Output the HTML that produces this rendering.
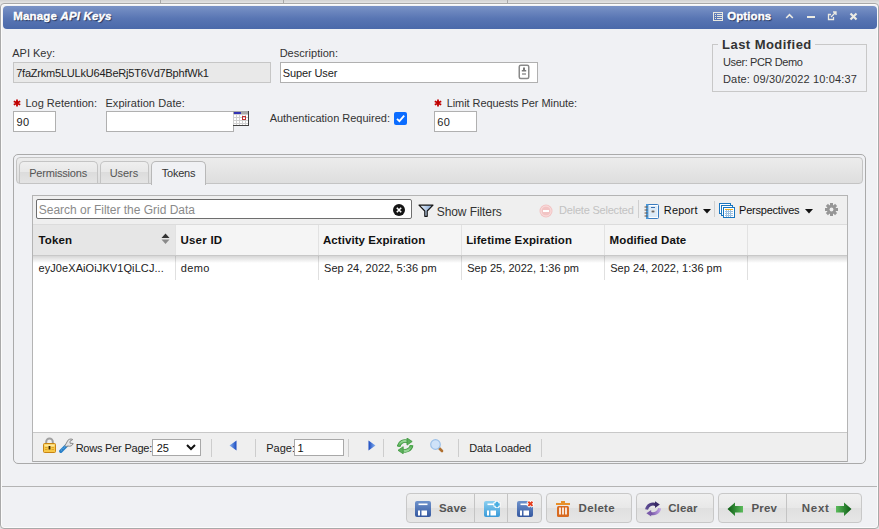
<!DOCTYPE html>
<html><head><meta charset="utf-8"><style>
html,body{margin:0;padding:0;}
body{width:879px;height:529px;position:relative;overflow:hidden;background:linear-gradient(#d2d2d2,#e4e4e4 3px,#e4e4e4);font-family:"Liberation Sans", sans-serif;}
body>div,body>svg{position:absolute;box-sizing:border-box;}
.t{white-space:nowrap;line-height:1;}
i{font-style:italic;}
</style></head><body>
<div style="left:160px;top:0px;width:1px;height:3px;background:#a8a8a8;"></div>
<div style="left:283px;top:0px;width:1px;height:3px;background:#a8a8a8;"></div>
<div style="left:507px;top:0px;width:1px;height:3px;background:#a8a8a8;"></div>
<div style="left:0px;top:3px;width:879px;height:526px;border:1px solid #a9a9a9;border-radius:4px;background:#f0f1f4;box-shadow:inset 0 0 0 1px #fbfbfb;"></div>
<div style="left:3px;top:6px;width:874px;height:23px;border-radius:4px;background:linear-gradient(#7a93c6,#5875b3 55%,#4a69aa);"></div>
<div class="t" id="t1" style="left:13.20px;top:10.75px;font-size:11.5px;font-weight:bold;color:#fff;letter-spacing:0.171px;text-shadow:1px 1px 1px #1a2a50;-webkit-text-stroke:0.35px #fff;">Manage <i>API Keys</i></div>
<svg style="left:713px;top:12px;" width="11" height="10" viewBox="0 0 11 10"><rect x="0.5" y="0.5" width="9" height="8" fill="none" stroke="#e8e8df" stroke-width="1"/><path d="M2 2.5h1M2 4.5h1M2 6.5h1M4 2.5h5M4 4.5h5M4 6.5h5" stroke="#e8e8df" stroke-width="1"/></svg>
<div class="t" id="t2" style="left:727.20px;top:10.50px;font-size:11.5px;font-weight:bold;color:#fff;letter-spacing:0.100px;text-shadow:1px 1px 1px #1a2a50;-webkit-text-stroke:0.35px #fff;">Options</div>
<svg style="left:785px;top:13px;" width="9" height="6" viewBox="0 0 9 6"><path d="M1.2 5L4.5 1.7L7.8 5" fill="none" stroke="#ecebe3" stroke-width="1.6"/></svg>
<svg style="left:807px;top:15px;" width="9" height="4" viewBox="0 0 9 4"><rect x="0" y="1" width="8" height="2" fill="#ecebe3"/></svg>
<svg style="left:827px;top:11px;" width="11" height="10" viewBox="0 0 11 10"><path d="M4 3.5H1.5V8.5H6.5V6" fill="none" stroke="#ecebe3" stroke-width="1.3"/><path d="M4 6L9 1M6 1H9V4" fill="none" stroke="#ecebe3" stroke-width="1.3"/></svg>
<svg style="left:849px;top:12px;" width="9" height="9" viewBox="0 0 9 9"><path d="M1.5 1.5L7.5 7.5M7.5 1.5L1.5 7.5" stroke="#ecebe3" stroke-width="2.2"/></svg>
<div class="t" id="t3" style="left:12.23px;top:47.76px;font-size:11px;font-weight:normal;color:#333;letter-spacing:-0.007px;">API Key:</div>
<div style="left:13px;top:62px;width:258px;height:21px;border:1px solid #c6c6c6;background:#e9e9e9;"></div>
<div class="t" id="t4" style="left:16.23px;top:68.31px;font-size:11px;font-weight:normal;color:#222;letter-spacing:-0.216px;">7faZrkm5LULkU64BeRj5T6Vd7BphfWk1</div>
<div class="t" id="t5" style="left:279.63px;top:47.76px;font-size:11px;font-weight:normal;color:#333;letter-spacing:0.032px;">Description:</div>
<div style="left:280px;top:62px;width:258px;height:21px;border:1px solid #b0b0b0;background:#fff;"></div>
<div class="t" id="t6" style="left:282.83px;top:67.86px;font-size:11px;font-weight:normal;color:#222;letter-spacing:-0.123px;">Super User</div>
<svg style="left:518px;top:64px;" width="12" height="16" viewBox="0 0 12 16"><rect x="1.25" y="1.25" width="9.5" height="13.3" rx="1.5" fill="#fff" stroke="#8a8a8a" stroke-width="1.5"/><path d="M5 3.5h2v2.5h1.2v1.5h-4.4v-1.5h1.2z" fill="#7a7a7a"/><rect x="4" y="9" width="4" height="2" fill="#b0b0b0"/></svg>
<div style="left:712px;top:44px;width:155px;height:48px;border:1px solid #c8c8c8;"></div>
<div style="left:718px;top:38px;width:97px;height:12px;background:#f0f1f4;"></div>
<div class="t" id="t7" style="left:722.09px;top:38.10px;font-size:13px;font-weight:bold;color:#333;letter-spacing:0.451px;">Last Modified</div>
<div class="t" id="t8" style="left:723.03px;top:57.06px;font-size:11px;font-weight:normal;color:#333;letter-spacing:-0.395px;">User: PCR Demo</div>
<div class="t" id="t9" style="left:723.03px;top:73.76px;font-size:11px;font-weight:normal;color:#333;letter-spacing:0.150px;">Date: 09/30/2022 10:04:37</div>
<svg style="left:13px;top:99px;" width="8" height="8" viewBox="0 0 8 8"><path d="M4 0.5V7.5M0.8 2.2L7.2 5.8M7.2 2.2L0.8 5.8" stroke="#c00000" stroke-width="1.8"/></svg>
<div class="t" id="t10" style="left:25.43px;top:98.36px;font-size:11px;font-weight:normal;color:#333;letter-spacing:0.006px;">Log Retention:</div>
<div class="t" id="t11" style="left:105.43px;top:98.36px;font-size:11px;font-weight:normal;color:#333;letter-spacing:0.071px;">Expiration Date:</div>
<div style="left:13px;top:111px;width:43px;height:21px;border:1px solid #b0b0b0;background:#fff;"></div>
<div class="t" id="t12" style="left:16.43px;top:117.36px;font-size:11px;font-weight:normal;color:#222;letter-spacing:0.400px;">90</div>
<div style="left:106px;top:111px;width:128px;height:21px;border:1px solid #b0b0b0;background:#fff;"></div>
<svg style="left:233px;top:111px;" width="16" height="15" viewBox="0 0 16 15"><rect x="0" y="0" width="16" height="15" fill="#fff"/><rect x="0" y="0" width="16" height="3" fill="#a8a8a8"/><rect x="1" y="1" width="7" height="2" fill="#3434b4"/><rect x="0" y="3" width="1" height="12" fill="#d0d0d0"/><rect x="3" y="3" width="1" height="12" fill="#d0d0d0"/><rect x="6" y="3" width="1" height="12" fill="#d0d0d0"/><rect x="9" y="3" width="1" height="12" fill="#d0d0d0"/><rect x="12" y="3" width="1" height="12" fill="#d0d0d0"/><rect x="15" y="3" width="1" height="12" fill="#d0d0d0"/><rect x="0" y="3" width="15" height="1" fill="#d0d0d0"/><rect x="0" y="6" width="15" height="1" fill="#d0d0d0"/><rect x="0" y="9" width="15" height="1" fill="#d0d0d0"/><rect x="0" y="12" width="15" height="1" fill="#d0d0d0"/><rect x="9.5" y="5.5" width="3" height="3" fill="none" stroke="#c03030" stroke-width="1"/><rect x="15" y="0" width="1" height="15" fill="#404040"/><rect x="0" y="14" width="16" height="1" fill="#404040"/></svg>
<div class="t" id="t13" style="left:269.63px;top:113.46px;font-size:11px;font-weight:normal;color:#333;letter-spacing:-0.007px;">Authentication Required:</div>
<div style="left:394px;top:112px;width:13px;height:13px;border-radius:2px;background:#0b6cff;"><svg width="13" height="13" style="position:absolute;left:0;top:0"><path d="M3 6.8L5.4 9.2L10.2 3.6" fill="none" stroke="#fff" stroke-width="1.8"/></svg></div>
<svg style="left:434px;top:99px;" width="8" height="8" viewBox="0 0 8 8"><path d="M4 0.5V7.5M0.8 2.2L7.2 5.8M7.2 2.2L0.8 5.8" stroke="#c00000" stroke-width="1.8"/></svg>
<div class="t" id="t14" style="left:446.63px;top:98.36px;font-size:11px;font-weight:normal;color:#333;letter-spacing:-0.060px;">Limit Requests Per Minute:</div>
<div style="left:434px;top:111px;width:43px;height:21px;border:1px solid #b0b0b0;background:#fff;"></div>
<div class="t" id="t15" style="left:437.23px;top:117.36px;font-size:11px;font-weight:normal;color:#222;letter-spacing:0.400px;">60</div>
<div style="left:13px;top:154px;width:853px;height:310px;border:1px solid #aaaaaa;border-radius:5px;background:#f0f1f4;"></div>
<div style="left:16px;top:157px;width:847px;height:27px;border:1px solid #c4c4c4;border-radius:4px;background:linear-gradient(#ececec,#dedede);"></div>
<div style="left:19px;top:161px;width:79px;height:22px;border:1px solid #c4c4c4;border-bottom:none;border-radius:5px 5px 0 0;background:linear-gradient(#efefef,#e7e7e7 50%,#dcdcdc 50%,#e4e4e4);"></div>
<div style="left:100px;top:161px;width:49px;height:22px;border:1px solid #c4c4c4;border-bottom:none;border-radius:5px 5px 0 0;background:linear-gradient(#efefef,#e7e7e7 50%,#dcdcdc 50%,#e4e4e4);"></div>
<div style="left:151px;top:161px;width:55px;height:24px;border:1px solid #b8b8b8;border-bottom:none;border-radius:5px 5px 0 0;background:#f0f1f4;"></div>
<div class="t" id="t16" style="left:29.23px;top:168.36px;font-size:11px;font-weight:normal;color:#555;letter-spacing:-0.190px;">Permissions</div>
<div class="t" id="t17" style="left:109.63px;top:168.36px;font-size:11px;font-weight:normal;color:#555;letter-spacing:-0.025px;">Users</div>
<div class="t" id="t18" style="left:161.83px;top:168.36px;font-size:11px;font-weight:normal;color:#333;letter-spacing:-0.250px;">Tokens</div>
<div style="left:32px;top:195px;width:816px;height:267px;border:1px solid #b4b4b4;background:#fff;"></div>
<div style="left:33px;top:196px;width:814px;height:29px;background:#efefef;border-bottom:1px solid #d8d8d8;"></div>
<div style="left:36px;top:199px;width:376px;height:20px;border:1px solid #6e6e6e;border-radius:2px;background:#fff;"></div>
<div class="t" id="t19" style="left:38.76px;top:204.13px;font-size:12px;font-weight:normal;color:#8a8a8a;letter-spacing:-0.019px;">Search or Filter the Grid Data</div>
<svg style="left:393px;top:204px;" width="12" height="12" viewBox="0 0 12 12"><circle cx="6" cy="6" r="6" fill="#151515"/><path d="M3.8 3.8L8.2 8.2M8.2 3.8L3.8 8.2" stroke="#fff" stroke-width="1.6"/></svg>
<svg style="left:418px;top:204px;" width="16" height="13" viewBox="0 0 16 13"><defs><linearGradient id="fg" x1="0" x2="1"><stop offset="0" stop-color="#f4f8ff"/><stop offset="1" stop-color="#7aa0d0"/></linearGradient></defs><path d="M1 1.2H15L9.2 7V12.3H6.8V7Z" fill="url(#fg)" stroke="#151515" stroke-width="1.2" stroke-linejoin="round"/></svg>
<div class="t" id="t20" style="left:436.76px;top:206.03px;font-size:12px;font-weight:normal;color:#333;letter-spacing:-0.087px;">Show Filters</div>
<svg style="left:539px;top:204px;" width="14" height="14" viewBox="0 0 14 14"><circle cx="7" cy="7" r="6.5" fill="#f2c4c4"/><circle cx="7" cy="7" r="5" fill="none" stroke="#fbe4e4" stroke-width="0.8"/><rect x="4" y="6" width="6" height="2" fill="#fff"/></svg>
<div class="t" id="t21" style="left:559.03px;top:205.16px;font-size:11px;font-weight:normal;color:#c2c2c2;letter-spacing:-0.206px;">Delete Selected</div>
<div style="left:638px;top:200px;width:1px;height:18px;background:#cfcfcf;"></div>
<svg style="left:644px;top:204px;" width="15" height="15" viewBox="0 0 15 15"><rect x="2.5" y="0.5" width="12" height="14" rx="1" fill="#fff" stroke="#3a7cc0" stroke-width="1"/><rect x="2" y="0" width="2.5" height="15" fill="#4a98d8"/><rect x="5" y="2" width="8.5" height="11" fill="#dbeaf8"/><rect x="7" y="3" width="4" height="1" fill="#3a70b0"/><rect x="7" y="6" width="4" height="3" fill="#fff"/><rect x="7.5" y="6.5" width="3" height="2" fill="#666"/><path d="M0.5 3h3M0.5 6h3M0.5 9h3M0.5 12h3" stroke="#6a5040" stroke-width="1"/></svg>
<div class="t" id="t22" style="left:663.83px;top:204.76px;font-size:11px;font-weight:normal;color:#111;letter-spacing:0.120px;">Report</div>
<svg style="left:703px;top:209px;" width="9" height="5" viewBox="0 0 9 5"><path d="M0 0H8L4 4.5Z" fill="#111"/></svg>
<div style="left:714px;top:201px;width:1px;height:16px;background:#cfcfcf;"></div>
<svg style="left:719px;top:203px;" width="16" height="15" viewBox="0 0 16 15"><rect x="0.5" y="0.5" width="11" height="10" fill="#fff" stroke="#1a76c0" stroke-width="1"/><rect x="2.5" y="2.5" width="11" height="10" fill="#fff" stroke="#1a76c0" stroke-width="1"/><rect x="4.5" y="4.5" width="11" height="10" fill="#fff" stroke="#1a76c0" stroke-width="1"/><rect x="6" y="6" width="8" height="1" fill="#f0b020"/><path d="M6 8.5h8M6 10.5h8M6 12.5h8M7.5 7v7M9.5 7v7M11.5 7v7" stroke="#9cc0e0" stroke-width="1"/></svg>
<div class="t" id="t23" style="left:739.03px;top:204.86px;font-size:11px;font-weight:normal;color:#111;letter-spacing:-0.221px;">Perspectives</div>
<svg style="left:805px;top:209px;" width="9" height="5" viewBox="0 0 9 5"><path d="M0 0H8L4 4.5Z" fill="#111"/></svg>
<svg style="left:825px;top:203px;" width="13" height="13" viewBox="0 0 13 13"><g transform="translate(6.5 6.5)" fill="#969696"><rect x="-1.5" y="-6.5" width="3" height="3" transform="rotate(0)"/><rect x="-1.5" y="-6.5" width="3" height="3" transform="rotate(45)"/><rect x="-1.5" y="-6.5" width="3" height="3" transform="rotate(90)"/><rect x="-1.5" y="-6.5" width="3" height="3" transform="rotate(135)"/><rect x="-1.5" y="-6.5" width="3" height="3" transform="rotate(180)"/><rect x="-1.5" y="-6.5" width="3" height="3" transform="rotate(225)"/><rect x="-1.5" y="-6.5" width="3" height="3" transform="rotate(270)"/><rect x="-1.5" y="-6.5" width="3" height="3" transform="rotate(315)"/><circle r="4.6"/></g><circle cx="6.5" cy="6.5" r="1.9" fill="#efefef"/></svg>
<div style="left:33px;top:224px;width:814px;height:32px;background:#f5f5f5;border-top:1px solid #dcdcdc;border-bottom:1px solid #c8c8c8;box-sizing:border-box;"></div>
<div style="left:33px;top:225px;width:142px;height:30px;background:#e6e6e6;"></div>
<div style="left:175px;top:225px;width:1px;height:30px;background:#e2e2e2;"></div>
<div style="left:175px;top:256px;width:1px;height:24px;background:#e0e0e0;"></div>
<div style="left:318px;top:225px;width:1px;height:30px;background:#e2e2e2;"></div>
<div style="left:318px;top:256px;width:1px;height:24px;background:#e0e0e0;"></div>
<div style="left:461px;top:225px;width:1px;height:30px;background:#e2e2e2;"></div>
<div style="left:461px;top:256px;width:1px;height:24px;background:#e0e0e0;"></div>
<div style="left:604px;top:225px;width:1px;height:30px;background:#e2e2e2;"></div>
<div style="left:604px;top:256px;width:1px;height:24px;background:#e0e0e0;"></div>
<div style="left:747px;top:225px;width:1px;height:30px;background:#e2e2e2;"></div>
<div style="left:747px;top:256px;width:1px;height:24px;background:#e0e0e0;"></div>
<div style="left:33px;top:256px;width:814px;height:7px;background:linear-gradient(rgba(0,0,0,0.16),rgba(0,0,0,0));"></div>
<div class="t" id="t24" style="left:38.59px;top:234.50px;font-size:11.5px;font-weight:bold;color:#111;letter-spacing:0.125px;">Token</div>
<svg style="left:161px;top:233px;" width="9" height="12" viewBox="0 0 9 12"><path d="M0.5 5H8.5L4.5 0.5Z" fill="#333"/><path d="M0.5 6.5H8.5L4.5 11Z" fill="#8a8a8a"/></svg>
<div class="t" id="t25" style="left:180.40px;top:234.50px;font-size:11.5px;font-weight:bold;color:#111;letter-spacing:0.249px;">User ID</div>
<div class="t" id="t26" style="left:323.00px;top:234.50px;font-size:11.5px;font-weight:bold;color:#111;letter-spacing:0.066px;">Activity Expiration</div>
<div class="t" id="t27" style="left:466.19px;top:234.50px;font-size:11.5px;font-weight:bold;color:#111;letter-spacing:0.126px;">Lifetime Expiration</div>
<div class="t" id="t28" style="left:609.59px;top:234.50px;font-size:11.5px;font-weight:bold;color:#111;letter-spacing:0.108px;">Modified Date</div>
<div class="t" id="t29" style="left:38.43px;top:262.76px;font-size:11px;font-weight:normal;color:#222;letter-spacing:0.091px;">eyJ0eXAiOiJKV1QiLCJ...</div>
<div class="t" id="t30" style="left:180.63px;top:262.76px;font-size:11px;font-weight:normal;color:#222;letter-spacing:0.435px;">demo</div>
<div class="t" id="t31" style="left:324.03px;top:262.76px;font-size:11px;font-weight:normal;color:#222;letter-spacing:0.065px;">Sep 24, 2022, 5:36 pm</div>
<div class="t" id="t32" style="left:467.23px;top:262.76px;font-size:11px;font-weight:normal;color:#222;letter-spacing:0.025px;">Sep 25, 2022, 1:36 pm</div>
<div class="t" id="t33" style="left:610.23px;top:262.76px;font-size:11px;font-weight:normal;color:#222;letter-spacing:0.020px;">Sep 24, 2022, 1:36 pm</div>
<div style="left:33px;top:432px;width:814px;height:30px;background:#efefef;border-top:1px solid #c8c8c8;border-bottom:1px solid #a8a8a8;box-sizing:border-box;"></div>
<svg style="left:43px;top:437px;" width="13" height="16" viewBox="0 0 13 16"><path d="M3.2 6.5V4.8a3.3 3.3 0 0 1 6.6 0V6.5" fill="none" stroke="#a0a0a0" stroke-width="2"/><path d="M2.2 6.5h2M8.8 6.5h2" stroke="#6a8ac0" stroke-width="1"/><rect x="0.5" y="6.5" width="12" height="9" rx="1" fill="#f7c848" stroke="#c88412" stroke-width="1"/><rect x="1.5" y="7.5" width="10" height="2" fill="#ffe89a"/><path d="M2 10.5h2.5M2 12.5h2.5M8.5 10.5h2.5M8.5 12.5h2.5" stroke="#d89a20" stroke-width="0.8"/><rect x="5.6" y="9" width="1.8" height="3.5" fill="#3a2400"/></svg>
<svg style="left:59px;top:438px;" width="15" height="15" viewBox="0 0 15 15"><path d="M1.8 13.2L7.5 7.5" stroke="#2a80c8" stroke-width="3.4" stroke-linecap="round"/><path d="M2.2 12.4L7 7.6" stroke="#8cd0f8" stroke-width="0.8" stroke-dasharray="1 1"/><path d="M7 8.5L6 7.5L8 4A4 4 0 0 1 13.8 1.5L11 3.2V5.2L14.2 5.5A4 4 0 0 1 9 8Z" fill="#e4e4e4" stroke="#8a8a8a" stroke-width="1"/></svg>
<div class="t" id="t34" style="left:75.63px;top:443.16px;font-size:11px;font-weight:normal;color:#222;letter-spacing:-0.217px;">Rows Per Page:</div>
<div style="left:152px;top:439px;width:49px;height:17px;border:1px solid #a8a8a8;background:#fff;"></div>
<div class="t" id="t35" style="left:156.63px;top:442.56px;font-size:11px;font-weight:normal;color:#111;letter-spacing:0.000px;">25</div>
<svg style="left:186px;top:444px;" width="10" height="7" viewBox="0 0 10 7"><path d="M1 1L5 5L9 1" fill="none" stroke="#111" stroke-width="2"/></svg>
<div style="left:211px;top:439px;width:1px;height:18px;background:#cdcdcd;"></div>
<div style="left:255px;top:439px;width:1px;height:18px;background:#cdcdcd;"></div>
<div style="left:348px;top:439px;width:1px;height:18px;background:#cdcdcd;"></div>
<div style="left:383px;top:439px;width:1px;height:18px;background:#cdcdcd;"></div>
<div style="left:458px;top:439px;width:1px;height:18px;background:#cdcdcd;"></div>
<div style="left:541px;top:439px;width:1px;height:18px;background:#cdcdcd;"></div>
<svg style="left:229px;top:440px;" width="8" height="11" viewBox="0 0 8 11"><defs><linearGradient id="bl" x1="0" x2="1"><stop offset="0" stop-color="#8ab4f0"/><stop offset="1" stop-color="#1a4ac0"/></linearGradient></defs><path d="M7.5 0.5V10.5L0.5 5.5Z" fill="url(#bl)"/></svg>
<div class="t" id="t36" style="left:266.23px;top:443.16px;font-size:11px;font-weight:normal;color:#222;letter-spacing:0.025px;">Page:</div>
<div style="left:294px;top:439px;width:50px;height:17px;border:1px solid #a8a8a8;background:#fff;"></div>
<div class="t" id="t37" style="left:297.43px;top:442.56px;font-size:11px;font-weight:normal;color:#111;letter-spacing:0.000px;">1</div>
<svg style="left:368px;top:440px;" width="8" height="11" viewBox="0 0 8 11"><defs><linearGradient id="br" x1="0" x2="1"><stop offset="0" stop-color="#1a4ac0"/><stop offset="1" stop-color="#8ab4f0"/></linearGradient></defs><path d="M0.5 0.5V10.5L7.5 5.5Z" fill="url(#br)"/></svg>
<svg style="left:397px;top:438px;" width="17" height="16" viewBox="0 0 17 16"><defs><linearGradient id="rg" x1="0" y1="0" x2="0" y2="1"><stop offset="0" stop-color="#9ad89a"/><stop offset="1" stop-color="#48a848"/></linearGradient></defs><g><path d="M1.6 8.6A6.6 6.6 0 0 1 10.6 3.5" fill="none" stroke="#3c963c" stroke-width="3.6"/><path d="M1.6 8.6A6.6 6.6 0 0 1 10.6 3.5" fill="none" stroke="url(#rg)" stroke-width="2.2"/><path d="M10 0L15.2 3.5L10 7.1Z" fill="#5cb05c" stroke="#3c963c" stroke-width="0.8"/></g><g transform="rotate(180 8.1 7.9)"><path d="M1.6 8.6A6.6 6.6 0 0 1 10.6 3.5" fill="none" stroke="#3c963c" stroke-width="3.6"/><path d="M1.6 8.6A6.6 6.6 0 0 1 10.6 3.5" fill="none" stroke="url(#rg)" stroke-width="2.2"/><path d="M10 0L15.2 3.5L10 7.1Z" fill="#5cb05c" stroke="#3c963c" stroke-width="0.8"/></g></svg>
<svg style="left:430px;top:439px;" width="14" height="14" viewBox="0 0 14 14"><path d="M9 9L12 12" stroke="#b07030" stroke-width="2.6" stroke-linecap="round"/><circle cx="5.5" cy="5.5" r="4.8" fill="#cfe2f8" stroke="#9cc0e8" stroke-width="1.2"/></svg>
<div class="t" id="t38" style="left:469.23px;top:443.16px;font-size:11px;font-weight:normal;color:#222;letter-spacing:-0.100px;">Data Loaded</div>
<div style="left:2px;top:486px;width:875px;height:1px;background:#b4b4b4;"></div>
<div style="left:406px;top:493px;width:136px;height:30px;border:1px solid #c8c8c8;border-radius:4px;background:linear-gradient(#f0f0f0,#e8e8e8 50%,#dfdfdf 50%,#e6e6e6);box-sizing:border-box;"></div>
<div style="left:474px;top:494px;width:1px;height:28px;background:#c4c4c4;"></div>
<div style="left:507px;top:494px;width:1px;height:28px;background:#c4c4c4;"></div>
<svg style="left:415px;top:501px;" width="16" height="16" viewBox="0 0 16 16"><defs><linearGradient id="sv1" x1="0" y1="0" x2="0" y2="1"><stop offset="0" stop-color="#6f93cc"/><stop offset="1" stop-color="#3558a0"/></linearGradient></defs><rect x="0" y="0" width="16" height="16" rx="2" fill="url(#sv1)"/><rect x="3.5" y="2.5" width="9" height="1.6" fill="#fff"/><rect x="3" y="9.5" width="2" height="5" fill="#fff"/><rect x="6.5" y="9.5" width="5.5" height="5" fill="#fff"/></svg>
<div class="t" id="t39" style="left:439.00px;top:502.60px;font-size:11.5px;font-weight:bold;color:#555;letter-spacing:0.202px;">Save</div>
<svg style="left:484px;top:500px;" width="17" height="17" viewBox="0 0 17 17"><g transform="translate(0 1)"><defs><linearGradient id="sv2" x1="0" y1="0" x2="0" y2="1"><stop offset="0" stop-color="#8acff0"/><stop offset="1" stop-color="#3a9ad8"/></linearGradient></defs><rect x="0" y="0" width="16" height="16" rx="2" fill="url(#sv2)"/><rect x="3.5" y="2.5" width="9" height="1.6" fill="#fff"/><rect x="3" y="9.5" width="2" height="5" fill="#fff"/><rect x="6.5" y="9.5" width="5.5" height="5" fill="#fff"/></g><path d="M9.5 4.5h7M13 1v7" stroke="#fff" stroke-width="4.4"/><path d="M10.3 4.5h5.4M13 1.8v5.4" stroke="#48aee2" stroke-width="2.6"/></svg>
<svg style="left:517px;top:500px;" width="17" height="17" viewBox="0 0 17 17"><g transform="translate(0 1)"><defs><linearGradient id="sv3" x1="0" y1="0" x2="0" y2="1"><stop offset="0" stop-color="#6f93cc"/><stop offset="1" stop-color="#3558a0"/></linearGradient></defs><rect x="0" y="0" width="16" height="16" rx="2" fill="url(#sv3)"/><rect x="3.5" y="2.5" width="9" height="1.6" fill="#fff"/><rect x="3" y="9.5" width="2" height="5" fill="#fff"/><rect x="6.5" y="9.5" width="5.5" height="5" fill="#fff"/></g><path d="M10.8 1.2L16 6.4M16 1.2L10.8 6.4" stroke="#fff" stroke-width="3.6"/><path d="M11.3 1.7L15.5 5.9M15.5 1.7L11.3 5.9" stroke="#e43c1c" stroke-width="2"/></svg>
<div style="left:546px;top:493px;width:86px;height:30px;border:1px solid #c8c8c8;border-radius:4px;background:linear-gradient(#f0f0f0,#e8e8e8 50%,#dfdfdf 50%,#e6e6e6);box-sizing:border-box;"></div>
<svg style="left:556px;top:501px;" width="14" height="16" viewBox="0 0 14 16"><rect x="5" y="0" width="4" height="2" fill="#e8902a"/><rect x="0" y="2" width="14" height="2" fill="#e8902a"/><rect x="1" y="5" width="12" height="11" rx="1.5" fill="#d86a20"/><rect x="3.2" y="6.5" width="1.6" height="7" fill="#fff"/><rect x="6.2" y="6.5" width="1.6" height="7" fill="#fff"/><rect x="9.2" y="6.5" width="1.6" height="7" fill="#fff"/></svg>
<div class="t" id="t40" style="left:578.59px;top:502.60px;font-size:11.5px;font-weight:bold;color:#555;letter-spacing:0.310px;">Delete</div>
<div style="left:636px;top:493px;width:78px;height:30px;border:1px solid #c8c8c8;border-radius:4px;background:linear-gradient(#f0f0f0,#e8e8e8 50%,#dfdfdf 50%,#e6e6e6);box-sizing:border-box;"></div>
<svg style="left:645px;top:501px;" width="17" height="16" viewBox="0 0 17 16"><defs><linearGradient id="cp1" x1="0" x2="1"><stop offset="0" stop-color="#5e4c94"/><stop offset="1" stop-color="#3a2c68"/></linearGradient><linearGradient id="cp2" x1="0" x2="1"><stop offset="0" stop-color="#bb9ce0"/><stop offset="1" stop-color="#7050a0"/></linearGradient></defs><g id="ca"><path d="M1.6 8.6A6.6 6.6 0 0 1 10.6 3.5" fill="none" stroke="url(#cp1)" stroke-width="3"/><path d="M10 0.2L14.8 3.5L10 6.9Z" fill="#3a2c68"/></g><g transform="rotate(180 8.1 7.9)"><path d="M1.6 8.6A6.6 6.6 0 0 1 10.6 3.5" fill="none" stroke="url(#cp2)" stroke-width="3"/><path d="M10 0.2L14.8 3.5L10 6.9Z" fill="#7a5aaa"/></g></svg>
<div class="t" id="t41" style="left:668.20px;top:502.60px;font-size:11.5px;font-weight:bold;color:#555;letter-spacing:0.125px;">Clear</div>
<div style="left:718px;top:493px;width:144px;height:30px;border:1px solid #c8c8c8;border-radius:4px;background:linear-gradient(#f0f0f0,#e8e8e8 50%,#dfdfdf 50%,#e6e6e6);box-sizing:border-box;"></div>
<div style="left:786px;top:494px;width:1px;height:28px;background:#c4c4c4;"></div>
<svg style="left:727px;top:502px;" width="16" height="15" viewBox="0 0 16 15"><defs><linearGradient id="ga" x1="0" x2="1"><stop offset="0" stop-color="#0a5a12"/><stop offset="1" stop-color="#5cbc5c"/></linearGradient></defs><path d="M0.5 7L8 0.5V4H16V10.5H8V14Z" fill="url(#ga)"/></svg>
<div class="t" id="t42" style="left:751.59px;top:502.60px;font-size:11.5px;font-weight:bold;color:#555;letter-spacing:0.100px;">Prev</div>
<div class="t" id="t43" style="left:801.80px;top:502.60px;font-size:11.5px;font-weight:bold;color:#555;letter-spacing:0.716px;">Next</div>
<svg style="left:836px;top:502px;" width="16" height="15" viewBox="0 0 16 15"><defs><linearGradient id="gb" x1="0" x2="1"><stop offset="0" stop-color="#5cbc5c"/><stop offset="1" stop-color="#0a5a12"/></linearGradient></defs><path d="M15.5 7L8 0.5V4H0V10.5H8V14Z" fill="url(#gb)"/></svg>
</body></html>
